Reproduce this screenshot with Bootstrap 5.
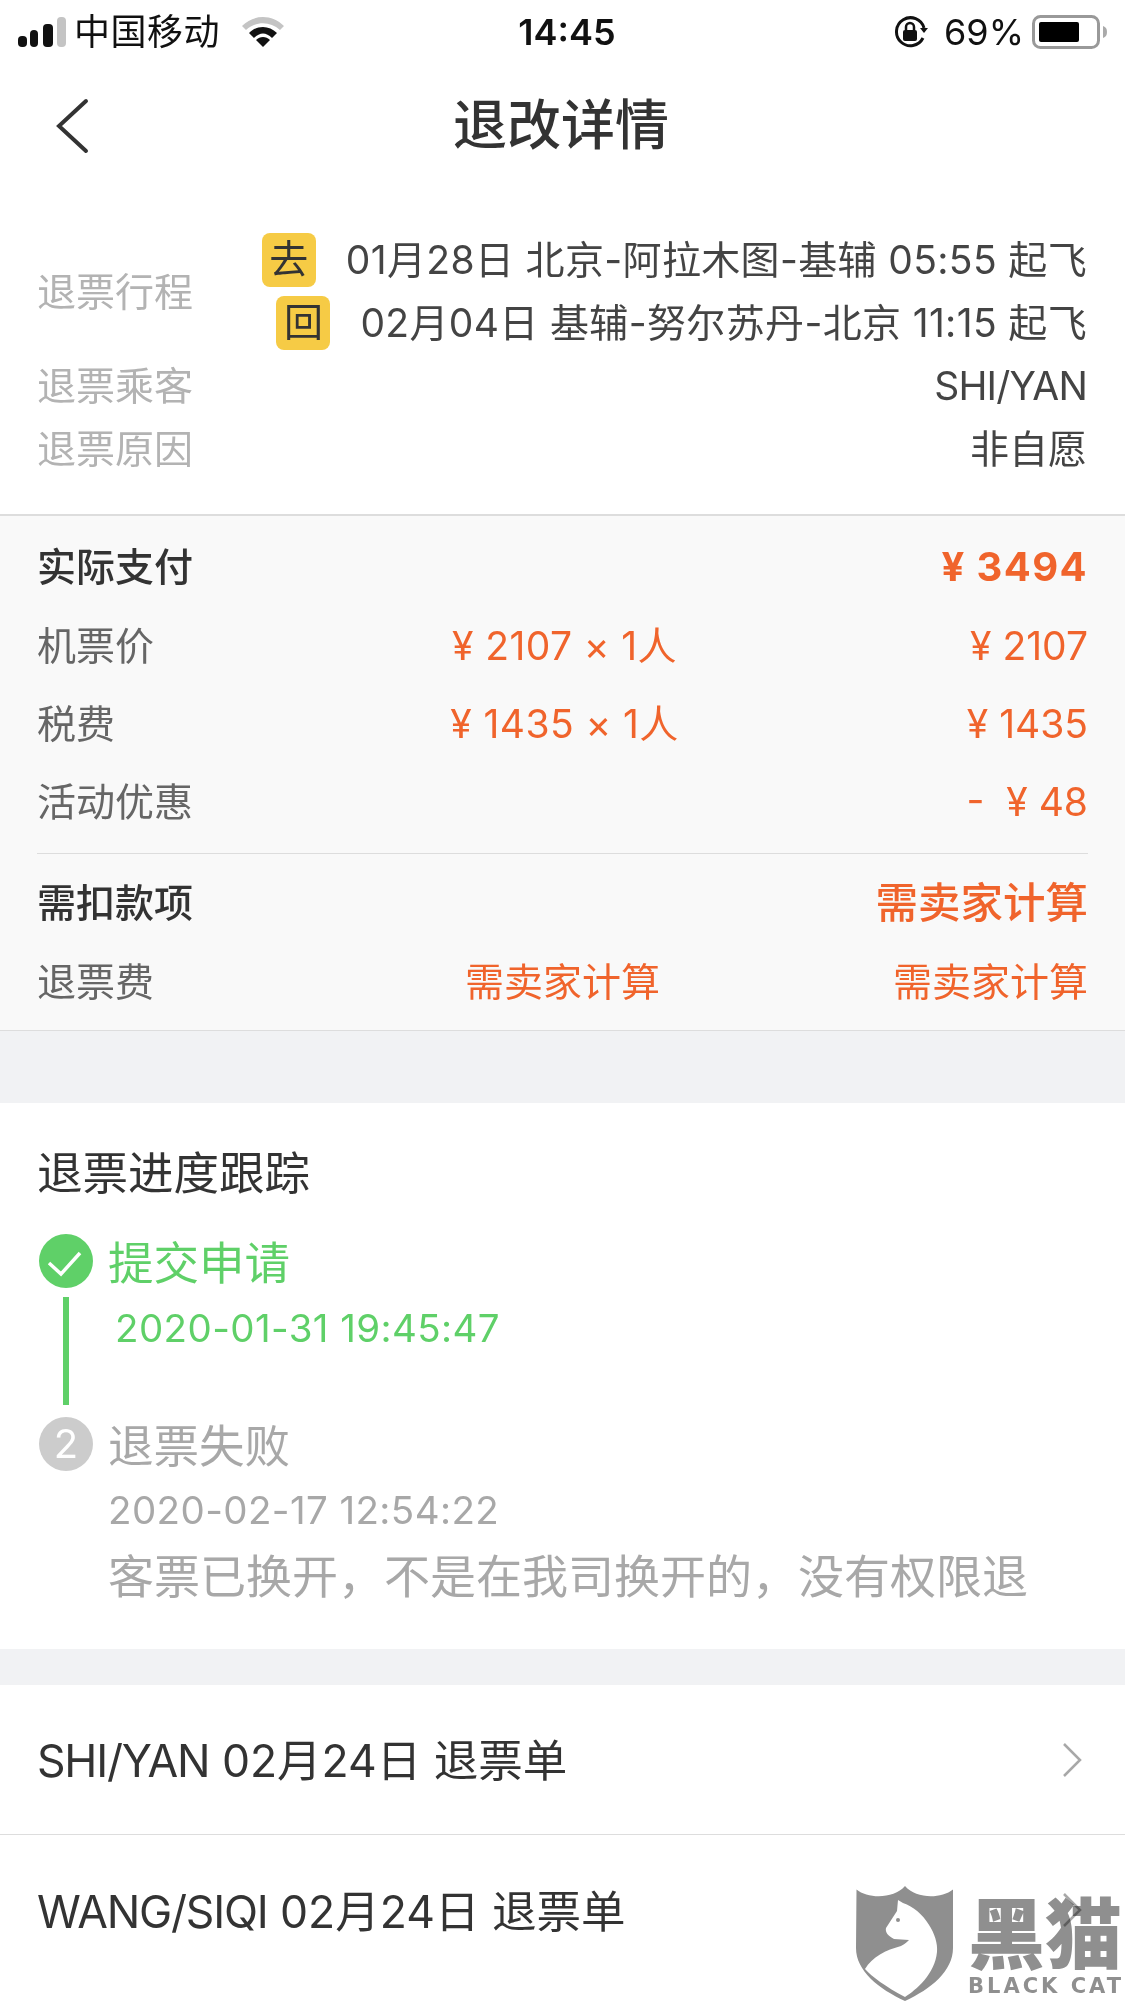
<!DOCTYPE html>
<html lang="zh-CN">

<head>
    <meta charset="UTF-8">
    <title>退改详情</title>
    <link href="https://cdn.jsdelivr.net/npm/bootstrap@5.3.3/dist/css/bootstrap.min.css" rel="stylesheet">
    <style>
        html, body { height: 2001px; overflow: hidden; }
        body { position: relative; background: #f1f2f4; color: #444; font-family: "Inter", "Noto Sans CJK SC", sans-serif; font-size: 39px; }
        .status-bar { height: 60px; background: #fff; color: #111; font-size: 36px; padding: 4px 17px 0 18px; }
        .status-side { flex: 1 1 0; }
        .carrier-name { letter-spacing: .5px; margin: 0 22px 0 8px; }
        .status-time { font-size: 36px; font-weight: 600; margin-left: 8px; }
        .top-nav { height: 130px; background: #fff; position: relative; }
        .top-nav h1 { font-size: 54px; font-weight: 500; color: #333; margin: 2px 3px 0 0; }
        .back-arrow { position: absolute; left: 55px; top: 38px; }
        .trip-block { background: #fff; padding: 39px 38px 33px 37px; border-bottom: 2px solid #ddd; }
        .info-row { height: 63px; }
        .info-label { color: #b3b3b3; }
        .trip-tag { width: 54px; height: 54px; border-radius: 8px; background: #f6cb45; color: #333; margin: -2px 30px 0 0; }
        .trip-line { height: 63px; }
        .trip-words { letter-spacing: .35px; }
        .pax-name { letter-spacing: -.8px; }
        .price-block { background: #f9f9f9; padding: 13px 37px 9px; border-bottom: 1px solid #ddd; }
        .price-row { height: 78px; color: #f0642c; }
        .price-row .row-name { color: #666; }
        .price-row.head-row { padding-bottom: 2px; }
        .price-row.head-row .row-name { color: #333; font-weight: 500; }
        .mid-price { padding-left: 4px; letter-spacing: .4px; }
        .total-value { font-size: 40px; font-weight: 700; letter-spacing: 1.4px; }
        .calc-value { font-size: 42.5px; font-weight: 500; }
        .block-line { height: 1px; background: #ddd; margin: 12px 0 11px; }
        .track-block { background: #fff; margin-top: 72px; height: 546px; padding: 42px 37px 0; }
        .track-title { font-size: 45.5px; line-height: 58px; color: #333; }
        .track-steps { margin-top: 31px; padding-left: 2px; }
        .step-dot { width: 54px; height: 54px; border-radius: 50%; color: #fff; flex: none; font-size: 40px; line-height: 54px; text-align: center; }
        .step-bar { width: 6px; height: 108px; background: #5fd068; margin: 9px auto 0; }
        .step-one { height: 183px; color: #5fd068; }
        .step-one .step-dot { background: #5fd068; }
        .step-two { color: #a8a8a8; }
        .step-two .step-dot { background: #ccc; }
        .step-text { margin-left: 15px; }
        .step-name { font-size: 45.5px; line-height: 60px; }
        .step-time { font-size: 38.5px; line-height: 66px; letter-spacing: .4px; }
        .step-one .step-time { padding-left: 7px; margin-top: 1px; }
        .step-note { font-size: 46px; line-height: 64px; margin-top: 1px; white-space: nowrap; }
        .order-list { margin-top: 36px; border-radius: 0; background: #fff; }
        .order-list .list-group-item { height: 150px; padding: 4px 43px 0 37px; font-size: 44.5px; color: #333; border-color: #ddd; border-bottom: 1px solid #ddd; }
        .order-list svg { margin-top: -4px; }
        .order-name { letter-spacing: -1.2px; }
        .order-tail { height: 16px; background: #fff; }
        .watermark { position: absolute; left: 856px; top: 1886px; width: 269px; height: 115px; mix-blend-mode: multiply; }
        .mark-words { position: absolute; left: 112px; top: 0; width: 157px; color: #8f8f8f; }
        .mark-cn { font-size: 77px; line-height: 88px; font-weight: 900; font-family: "Noto Sans CJK SC", sans-serif; white-space: nowrap; }
        .mark-en { font-size: 21px; line-height: 22px; font-weight: 700; letter-spacing: 3px; white-space: nowrap; margin-top: 1px; font-family: "DejaVu Sans", sans-serif; }
    </style>
</head>

<body>

    <div class="status-bar d-flex align-items-center justify-content-between">
        <div class="status-side d-flex align-items-center">
            <svg width="48" height="30" viewBox="0 0 48 30">
                <rect x="0" y="19" width="9" height="11" rx="4" fill="#111" />
                <rect x="12" y="13" width="8" height="17" rx="4" fill="#111" />
                <rect x="25" y="7" width="10" height="23" rx="4" fill="#111" />
                <rect x="39" y="0" width="9" height="30" rx="4" fill="#c4c4c4" />
            </svg>
            <span class="carrier-name">中国移动</span>
            <svg width="42" height="30" viewBox="0 0 42 30">
                <path d="M0 9C12-3 30-3 42 9L38 13C28 4 14 4 4 13Z" fill="#c4c4c4" />
                <path d="M7 16C15 8 27 8 35 16L30 21C24 15 18 15 12 21Z" fill="#111" />
                <path d="M14 23C18 19 24 19 28 23L21 30Z" fill="#111" />
            </svg>
        </div>
        <div class="status-time">14:45</div>
        <div class="status-side d-flex align-items-center justify-content-end">
            <svg width="34" height="32" viewBox="0 0 34 32" fill="none">
                <path d="M29 22A14 14 0 1 1 30 12" stroke="#111" stroke-width="3" />
                <path d="M26 12H34L30 17Z" fill="#111" />
                <rect x="9" y="14" width="14" height="11" rx="2" fill="#111" />
                <path d="M12 14V11A4 4 0 0 1 20 11V14" stroke="#111" stroke-width="2.5" />
            </svg>
            <span class="ms-3 me-2">69%</span>
            <svg width="76" height="34" viewBox="0 0 76 34" fill="none">
                <rect x="1.5" y="1.5" width="65" height="31" rx="7" stroke="#999" stroke-width="3" />
                <rect x="7" y="7" width="40" height="20" rx="2" fill="#000" />
                <path d="M71 11C74 12 75 14 75 17C75 20 74 22 71 23Z" fill="#aaa" />
            </svg>
        </div>
    </div>

    <div class="top-nav d-flex align-items-center justify-content-center">
        <svg class="back-arrow" width="34" height="56" viewBox="0 0 34 56" fill="none">
            <path d="M31 3L4 28L31 53" stroke="#333" stroke-width="4" stroke-linecap="round" />
        </svg>
        <h1>退改详情</h1>
    </div>

    <div class="trip-block">
        <div class="d-flex justify-content-between align-items-center">
            <div class="info-label">退票行程</div>
            <div>
                <div class="trip-line d-flex align-items-center justify-content-end">
                    <span class="trip-tag d-flex align-items-center justify-content-center">去</span>
                    <span class="trip-words">01月28日 北京-阿拉木图-基辅 05:55 起飞</span>
                </div>
                <div class="trip-line d-flex align-items-center justify-content-end">
                    <span class="trip-tag d-flex align-items-center justify-content-center">回</span>
                    <span class="trip-words">02月04日 基辅-努尔苏丹-北京 11:15 起飞</span>
                </div>
            </div>
        </div>
        <div class="info-row d-flex justify-content-between align-items-center">
            <div class="info-label">退票乘客</div>
            <div class="pax-name">SHI/YAN</div>
        </div>
        <div class="info-row d-flex justify-content-between align-items-center">
            <div class="info-label">退票原因</div>
            <div>非自愿</div>
        </div>
    </div>

    <div class="price-block">
        <div class="price-row head-row d-flex justify-content-between align-items-center">
            <div class="row-name">实际支付</div>
            <div class="total-value">¥ 3494</div>
        </div>
        <div class="price-row row g-0 align-items-center">
            <div class="col-4 row-name">机票价</div>
            <div class="col-4 text-center mid-price">¥ 2107 × 1人</div>
            <div class="col-4 text-end">¥ 2107</div>
        </div>
        <div class="price-row row g-0 align-items-center">
            <div class="col-4 row-name">税费</div>
            <div class="col-4 text-center mid-price">¥ 1435 × 1人</div>
            <div class="col-4 text-end">¥ 1435</div>
        </div>
        <div class="price-row row g-0 align-items-center">
            <div class="col-4 row-name">活动优惠</div>
            <div class="col-4"></div>
            <div class="col-4 text-end">-&nbsp; ¥ 48</div>
        </div>
        <div class="block-line"></div>
        <div class="price-row head-row d-flex justify-content-between align-items-center">
            <div class="row-name">需扣款项</div>
            <div class="calc-value">需卖家计算</div>
        </div>
        <div class="price-row row g-0 align-items-center">
            <div class="col-4 row-name">退票费</div>
            <div class="col-4 text-center">需卖家计算</div>
            <div class="col-4 text-end">需卖家计算</div>
        </div>
    </div>

    <div class="track-block">
        <div class="track-title">退票进度跟踪</div>
        <div class="track-steps">
            <div class="step-one d-flex">
                <div>
                    <div class="step-dot">
                        <svg width="54" height="54" viewBox="0 0 54 54" fill="none">
                            <path d="M10 26L22 37L41 16" stroke="#fff" stroke-width="3.5" />
                        </svg>
                    </div>
                    <div class="step-bar"></div>
                </div>
                <div class="step-text">
                    <div class="step-name">提交申请</div>
                    <div class="step-time">2020-01-31 19:45:47</div>
                </div>
            </div>
            <div class="step-two d-flex">
                <div class="step-dot">2</div>
                <div class="step-text">
                    <div class="step-name">退票失败</div>
                    <div class="step-time">2020-02-17 12:54:22</div>
                    <div class="step-note">客票已换开，不是在我司换开的，没有权限退</div>
                </div>
            </div>
        </div>
    </div>

    <div class="order-list list-group list-group-flush">
        <div class="list-group-item d-flex justify-content-between align-items-center">
            <span><span class="order-name">SHI/YAN</span> 02月24日 退票单</span>
            <svg width="20" height="36" viewBox="0 0 20 36" fill="none"><path d="M2 2L18 18L2 34" stroke="#a8a8a8" stroke-width="2.5" /></svg>
        </div>
        <div class="list-group-item d-flex justify-content-between align-items-center">
            <span><span class="order-name">WANG/SIQI</span> 02月24日 退票单</span>
            <svg width="20" height="36" viewBox="0 0 20 36" fill="none"><path d="M2 2L18 18L2 34" stroke="#a8a8a8" stroke-width="2.5" /></svg>
        </div>
    </div>
    <div class="order-tail"></div>

    <div class="watermark">
        <svg width="97" height="115" viewBox="0 0 97 115">
            <path d="M0.5 3.5C12 13 38 13 49 0C60 13 85 13 97 3.5V62C97 85 75 103 49 115C23 103 0 85 0 62Z" fill="#8f8f8f" />
            <path d="M42 14L47 17C68 24 83 50 81 66C79 88 60 104 49 111C30 101 15 90 9 83C16 71 30 64 45 60C49 58 51 56 53 54L38 53C32 50 29 46 30 42L41 25Z" fill="#fff" />
            <circle cx="42" cy="34" r="2" fill="#8f8f8f" />
        </svg>
        <div class="mark-words">
            <div class="mark-cn">黑猫</div>
            <div class="mark-en">BLACK CAT</div>
        </div>
    </div>

    <script src="https://cdn.jsdelivr.net/npm/bootstrap@5.3.3/dist/js/bootstrap.bundle.min.js"></script>
</body>

</html>
